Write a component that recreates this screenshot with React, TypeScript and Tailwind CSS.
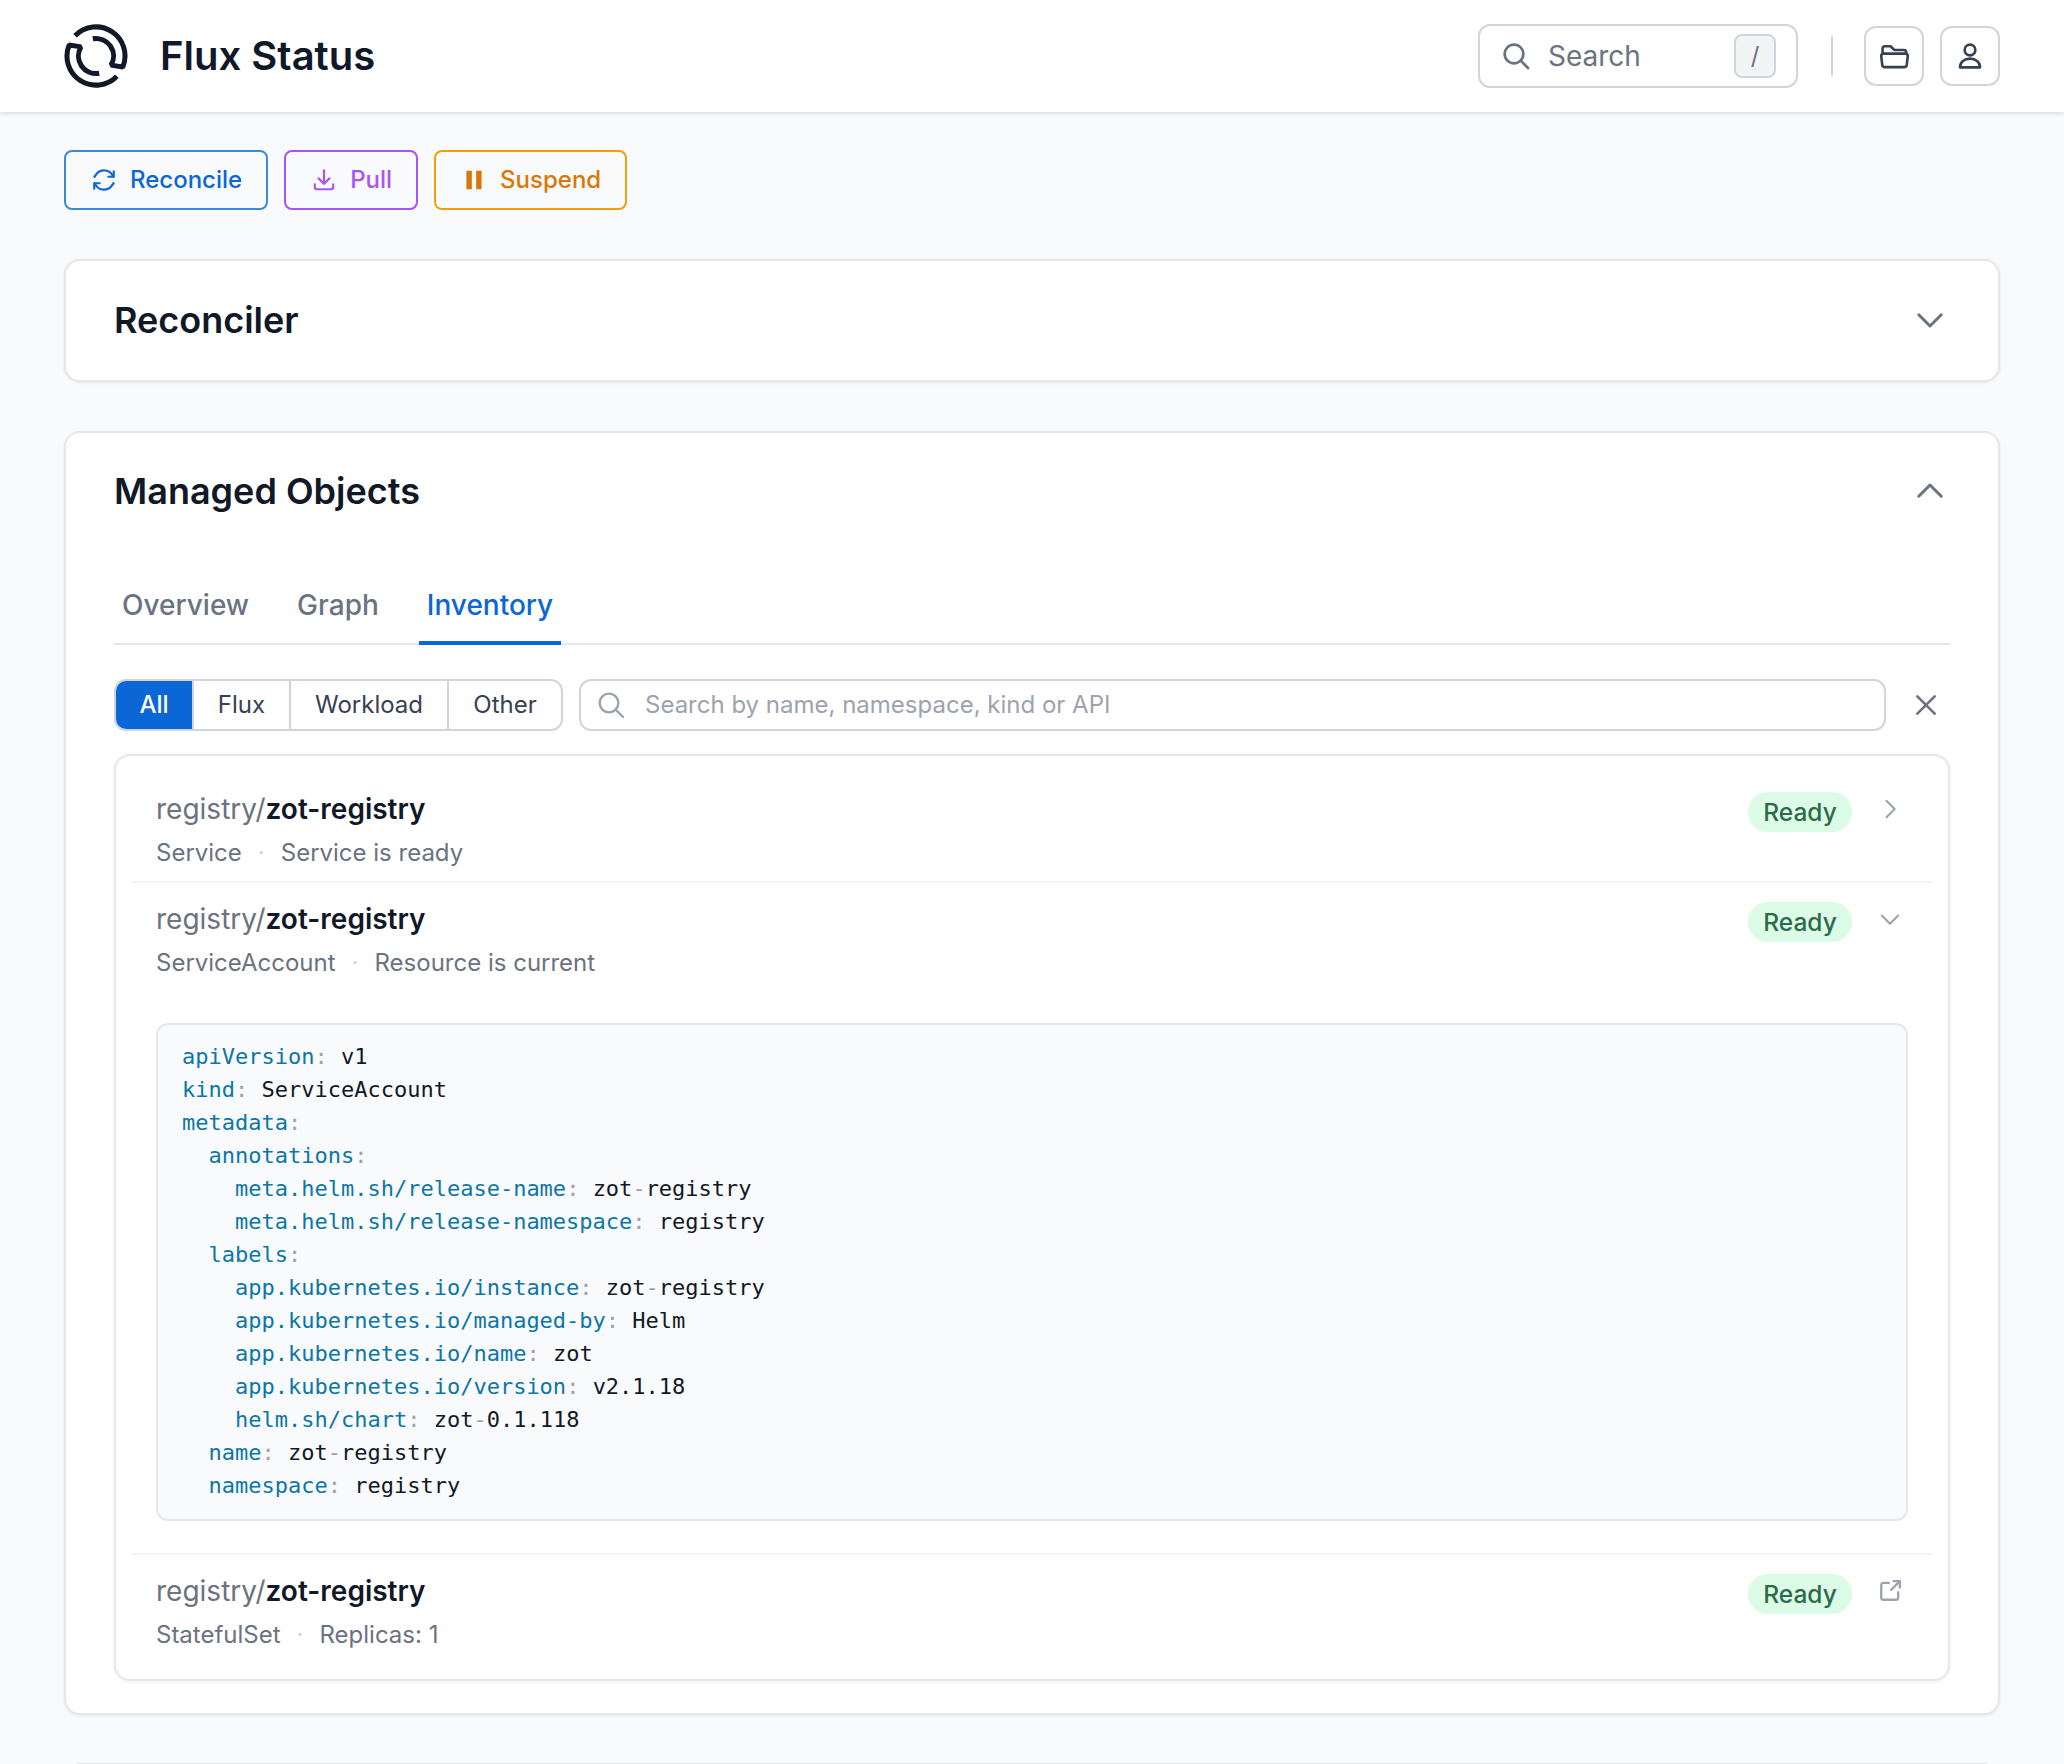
/* Flux Status — resource dashboard, managed objects inventory */
import type { ReactNode } from "react";

const yamlLines: [number, string, string?][] = [
  [0, "apiVersion", "v1"],
  [0, "kind", "ServiceAccount"],
  [0, "metadata"],
  [1, "annotations"],
  [2, "meta.helm.sh/release-name", "zot-registry"],
  [2, "meta.helm.sh/release-namespace", "registry"],
  [1, "labels"],
  [2, "app.kubernetes.io/instance", "zot-registry"],
  [2, "app.kubernetes.io/managed-by", "Helm"],
  [2, "app.kubernetes.io/name", "zot"],
  [2, "app.kubernetes.io/version", "v2.1.18"],
  [2, "helm.sh/chart", "zot-0.1.118"],
  [1, "name", "zot-registry"],
  [1, "namespace", "registry"],
];

function Icon({ className, width = 2, children }: { className: string; width?: number; children: ReactNode }) {
  return (
    <svg viewBox="0 0 24 24" fill="none" stroke="currentColor" strokeWidth={width} strokeLinecap="round" strokeLinejoin="round" className={className}>
      {children}
    </svg>
  );
}

function Logo() {
  const half = "M28.8 14.8 A17.5 17.5 0 0 1 47 41.1 L58.8 43 A29 29 0 0 0 11.1 11.8";
  return (
    <svg viewBox="0 0 64 64" fill="none" stroke="#111827" strokeWidth="5" strokeLinejoin="bevel" className="w-[64px] h-[64px] shrink-0">
      <path d={half} />
      <path d={half} transform="rotate(180 32 32)" />
    </svg>
  );
}

function ActionButton({ label, className, icon }: { label: string; className: string; icon: ReactNode }) {
  return (
    <button className={`h-[60px] flex items-center gap-[13px] pl-[25px] pr-[24px] rounded-[8px] border-2 text-[24px] font-medium ${className}`}>
      {icon}
      {label}
    </button>
  );
}

function Ready() {
  return <span className="h-[40px] w-[104px] flex items-center justify-center rounded-full bg-[#dcfce7] text-[#2d6a4a] text-[24.5px] font-medium">Ready</span>;
}

// registry values draw the hyphen in the punctuation grey
function YamlValue({ value }: { value: string }) {
  const parts = value.split("-");
  return (
    <span className="text-[#111827]">
      {" "}
      {parts.map((part, i) => (
        <span key={i}>
          {i > 0 && <span className="text-[#9ca3af]">-</span>}
          {part}
        </span>
      ))}
    </span>
  );
}

function Row({ kind, message, icon, className }: { kind: string; message: string; icon: ReactNode; className: string }) {
  return (
    <div className={`px-[24px] flex justify-between ${className}`}>
      <div>
        <p className="text-[28px] leading-[36px] text-[#6b7280]">
          registry/<span className="font-semibold text-[#111827]">zot-registry</span>
        </p>
        <p className="mt-[8px] text-[24px] leading-[36px] text-[#6b7280]">
          {kind}
          <span className="mx-[16px] text-[#d1d5db]">·</span>
          {message}
        </p>
      </div>
      <div className="flex items-start">
        <div className="mt-[1px]"><Ready /></div>
        <div className="w-[56px] h-[36px] flex justify-end items-center text-[#9ca3af] pr-[4px]">{icon}</div>
      </div>
    </div>
  );
}

function Tab({ label, active }: { label: string; active?: boolean }) {
  return (
    <button className={`h-[69px] -mb-[2px] px-[8px] pb-[8px] text-[28px] font-medium border-b-4 ${active ? "text-[#0b66d6] border-[#0b66d6]" : "text-[#6b7280] border-transparent"}`}>
      {label}
    </button>
  );
}

export default function App() {
  return (
    <div className="min-h-[1764px] h-[1764px] overflow-hidden bg-[#f9fafb] font-['Inter',sans-serif]">
      {/* Header */}
      <header className="h-[112px] bg-white px-[64px] flex items-center justify-between shadow-[0_2px_4px_rgba(17,24,39,0.12)]">
        <div className="flex items-center gap-[32px]">
          <Logo />
          <h1 className="text-[40px] font-semibold text-[#111827]">Flux Status</h1>
        </div>
        <div className="flex items-center">
          <div className="w-[320px] h-[64px] rounded-[12px] border-2 border-[#d1d5db] flex items-center pl-[20px] pr-[20px]">
            <Icon className="w-[32px] h-[32px] text-[#6b7280]"><circle cx="10.5" cy="10.5" r="7" /><path d="m21 21-5.5-5.5" /></Icon>
            <span className="ml-[16px] text-[28px] text-[#6b7280] flex-1">Search</span>
            <kbd className="w-[42px] h-[44px] rounded-[8px] border-2 border-[#d1d5db] bg-[#f3f4f6] flex items-center justify-center text-[24px] text-[#6b7280] font-['Inter',sans-serif]">/</kbd>
          </div>
          <div className="w-[2px] h-[40px] bg-[#d1d5db] ml-[33px] mr-[31px]" />
          <button className="w-[60px] h-[60px] rounded-[12px] border-2 border-[#d1d5db] flex items-center justify-center text-[#374151]">
            <Icon className="w-[35px] h-[35px]" width={1.8}><path d="M3.8 10V6.5A1.5 1.5 0 0 1 5.3 5h4l2.5 2.5h6.7a1.5 1.5 0 0 1 1.5 1.5v1" /><path d="M4.5 10h15a1.6 1.6 0 0 1 1.6 1.8l-.7 6a1.7 1.7 0 0 1-1.7 1.5H5.3a1.7 1.7 0 0 1-1.7-1.5l-.7-6A1.6 1.6 0 0 1 4.5 10Z" /></Icon>
          </button>
          <button className="ml-[16px] w-[60px] h-[60px] rounded-[12px] border-2 border-[#d1d5db] flex items-center justify-center text-[#374151]">
            <Icon className="w-[32px] h-[32px]" width={2}><circle cx="12" cy="7.5" r="4" /><path d="M4.5 20.5c0-4 3.3-6.5 7.5-6.5s7.5 2.5 7.5 6.5Z" /></Icon>
          </button>
        </div>
      </header>

      <main className="px-[64px]">
        {/* Actions */}
        <div className="pt-[38px] flex gap-[16px]">
          <ActionButton label="Reconcile" className="border-[#3b8ad8] text-[#0b66d6]" icon={
            <Icon className="w-[26px] h-[26px]"><path d="M16 9h5V4" /><path d="M8 15H3v5" /><path d="M20.5 9A9 9 0 0 0 5 6.5L3.2 9" /><path d="M3.5 15A9 9 0 0 0 19 17.5l1.8-2.5" /></Icon>
          } />
          <ActionButton label="Pull" className="border-[#a855f7] text-[#a855f7]" icon={
            <Icon className="w-[26px] h-[26px]"><path d="M12 3v12" /><path d="m7 10.5 5 5 5-5" /><path d="M3.5 16v2.5a2 2 0 0 0 2 2h13a2 2 0 0 0 2-2V16" /></Icon>
          } />
          <ActionButton label="Suspend" className="border-[#f59e0b] text-[#d97706]" icon={
            <svg viewBox="0 0 24 24" fill="currentColor" className="w-[26px] h-[26px]"><rect x="5" y="3.5" width="5" height="17" rx="0.5" /><rect x="14" y="3.5" width="5" height="17" rx="0.5" /></svg>
          } />
        </div>

        {/* Reconciler card */}
        <section className="mt-[49px] h-[123px] pb-[2px] rounded-[16px] border-2 border-[#e5e7eb] bg-white shadow-[0_1px_3px_rgba(17,24,39,0.08)] px-[48px] flex items-center justify-between">
          <h2 className="text-[36px] font-semibold text-[#111827]">Reconciler</h2>
          <Icon className="w-[36px] h-[36px] text-[#6b7280] mr-[2px]"><path d="m4.5 8.5 7.5 7.5 7.5-7.5" /></Icon>
        </section>

        {/* Managed objects card */}
        <section className="mt-[49px] h-[1284px] rounded-[16px] border-2 border-[#e5e7eb] bg-white shadow-[0_1px_3px_rgba(17,24,39,0.08)] px-[48px]">
          <div className="h-[116px] flex items-center justify-between">
            <h2 className="text-[36px] font-semibold text-[#111827]">Managed Objects</h2>
            <Icon className="w-[36px] h-[36px] text-[#6b7280] mr-[2px]"><path d="m4.5 15.5 7.5-7.5 7.5 7.5" /></Icon>
          </div>
          <div className="mt-[27px] border-b-2 border-[#e5e7eb] flex gap-[32px]">
            <Tab label="Overview" />
            <Tab label="Graph" />
            <Tab label="Inventory" active />
          </div>

          {/* Filters */}
          <div className="mt-[34px] flex items-center">
            <div className="h-[52px] flex rounded-[12px] border-2 border-[#d1d5db] overflow-hidden text-[24px] text-[#374151]">
              <span className="w-[76px] bg-[#0b66d6] text-white font-medium flex items-center justify-center">All</span>
              <span className="w-[97px] border-l-2 border-[#d1d5db] flex items-center justify-center">Flux</span>
              <span className="w-[158px] border-l-2 border-[#d1d5db] flex items-center justify-center">Workload</span>
              <span className="w-[114px] border-l-2 border-[#d1d5db] flex items-center justify-center">Other</span>
            </div>
            <div className="ml-[16px] w-[1307px] h-[52px] rounded-[12px] border-2 border-[#d1d5db] flex items-center pl-[14px]">
              <Icon className="w-[32px] h-[32px] text-[#9ca3af]" width={1.8}><circle cx="10.5" cy="10.5" r="7" /><path d="m21 21-5.5-5.5" /></Icon>
              <span className="ml-[18px] text-[24px] text-[#9ca3af]">Search by name, namespace, kind or API</span>
            </div>
            <Icon className="ml-[24px] w-[32px] h-[32px] text-[#6b7280]"><path d="m5.5 5.5 13 13M18.5 5.5l-13 13" /></Icon>
          </div>

          {/* Inventory list */}
          <div className="mt-[23px] h-[927px] rounded-[16px] border-2 border-[#e5e7eb] shadow-[0_1px_3px_rgba(17,24,39,0.08)] px-[16px] pt-[35px]">
            <Row kind="Service" message="Service is ready" className="h-[92px] border-b-2 border-[#f3f4f6]" icon={
              <Icon className="w-[28px] h-[28px]" width={1.8}><path d="m9 5 7 7-7 7" /></Icon>
            } />
            <Row kind="ServiceAccount" message="Resource is current" className="pt-[18px] h-[140px]" icon={
              <Icon className="w-[28px] h-[28px]" width={1.8}><path d="m5 9 7 7 7-7" /></Icon>
            } />
            <div className="px-[24px] pb-[32px] border-b-2 border-[#f3f4f6]">
              <pre className="h-[498px] rounded-[12px] border-2 border-[#e5e7eb] bg-[#f9fafb] pl-[24px] pr-[24px] py-[15px] font-['DejaVu_Sans_Mono',monospace] text-[22px] leading-[33px]">
                {yamlLines.map(([indent, key, value]) => (
                  <div key={key}>
                    {"  ".repeat(indent)}
                    <span className="text-[#0b76a8]">{key}</span>
                    <span className="text-[#9ca3af]">:</span>
                    {value && <YamlValue value={value} />}
                  </div>
                ))}
              </pre>
            </div>
            <Row kind="StatefulSet" message="Replicas: 1" className="pt-[18px]" icon={
              <Icon className="w-[28px] h-[28px]" width={2}><path d="M11 5H6.5A2 2 0 0 0 4.5 7v10.5a2 2 0 0 0 2 2H17a2 2 0 0 0 2-2V13" /><path d="M13 11l7-7" /><path d="M15 3.5h5.5V9" /></Icon>
            } />
          </div>
        </section>

        {/* Footer edge */}
        <div className="mt-[48px] mx-[13px] h-[2px] bg-[#e5e7eb]" />
      </main>
    </div>
  );
}
